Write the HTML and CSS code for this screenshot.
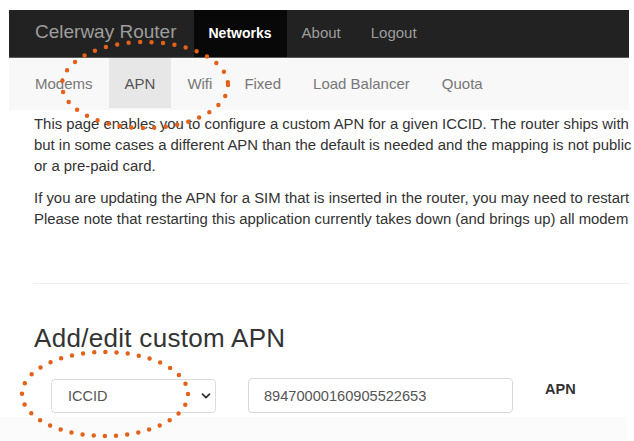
FILE: index.html
```html
<!DOCTYPE html>
<html>
<head>
<meta charset="utf-8">
<title>Celerway Router - APN</title>
<link rel="stylesheet" href="styles.css">
</head>
<body>
<div class="page">
  <nav class="navbar">
    <span class="brand">Celerway Router</span>
    <ul class="nav">
      <li class="active">Networks</li>
      <li>About</li>
      <li>Logout</li>
    </ul>
  </nav>
  <nav class="subnav">
    <ul class="tabs">
      <li>Modems</li>
      <li class="active">APN</li>
      <li>Wifi</li>
      <li>Fixed</li>
      <li>Load Balancer</li>
      <li>Quota</li>
    </ul>
  </nav>
</div>
<main class="content">
  <p><span class="line">This page enables you to configure a custom APN for a given ICCID. The router ships with</span><span class="line">but in some cases a different APN than the default is needed and the mapping is not public</span><span class="line">or a pre-paid card.</span></p>
  <p><span class="line">If you are updating the APN for a SIM that is inserted in the router, you may need to restart</span><span class="line">Please note that restarting this application currently takes down (and brings up) all modem</span></p>
  <hr class="rule">
  <h2 class="title">Add/edit custom APN</h2>
  <div class="form-row">
    <div class="select">
      <span>ICCID</span>
      <svg class="chev" width="10" height="8" viewBox="0 0 10 8"><path d="M1.5 2.2 L5 5.6 L8.5 2.2" fill="none" stroke="#333" stroke-width="1.8" stroke-linecap="round" stroke-linejoin="round"/></svg>
    </div>
    <div class="input">89470000160905522653</div>
    <label class="label">APN</label>
  </div>
  <div class="below"></div>
</main>
<svg class="annot" width="634" height="441" viewBox="0 0 634 441">
  <ellipse cx="145" cy="85" rx="83" ry="43" fill="none" stroke="#e2621b" stroke-width="4.5" stroke-dasharray="0 11.5" stroke-linecap="round"/>
  <ellipse cx="105" cy="394" rx="83" ry="42" fill="none" stroke="#e2621b" stroke-width="4.5" stroke-dasharray="0 11.2" stroke-linecap="round"/>
</svg>
</body>
</html>
```
FILE: styles.css
```css
* { box-sizing: border-box; }
html, body {
  margin: 0;
  padding: 0;
  width: 634px;
  height: 441px;
  overflow: hidden;
  background: #fff;
  font-family: "Liberation Sans", Arial, sans-serif;
  color: #333;
}
body { position: relative; }

.page {
  padding: 10px 5px 0 9px;
}

.navbar {
  display: flex;
  align-items: stretch;
  height: 48px;
  background: #222;
  border-bottom: 1px solid #5a5a5a;
  padding-left: 11px;
}
.brand {
  display: flex;
  align-items: center;
  padding: 0 17px 3px 15px;
  font-size: 19px;
  color: #9d9d9d;
}
.nav {
  display: flex;
  list-style: none;
  margin: 0;
  padding: 0;
}
.nav li {
  display: flex;
  align-items: center;
  padding: 0 15px 2px;
  font-size: 15px;
  color: #9d9d9d;
}
.nav li.active {
  background: #080808;
  color: #fff;
  font-weight: bold;
  font-size: 14px;
}

.subnav {
  background: #f8f8f8;
  height: 52px;
  padding: 0 0 2px 10px;
}
.tabs {
  display: flex;
  list-style: none;
  margin: 0;
  padding: 0;
  height: 50px;
}
.tabs li {
  display: flex;
  align-items: center;
  padding: 0 16px;
  font-size: 15px;
  color: #777;
}
.tabs li.active {
  background: #e7e7e7;
  color: #555;
}

.content {
  padding: 4px 5px 0 34px;
}
.content p {
  margin: 0 0 11px;
  font-size: 14.9px;
  line-height: 21px;
  color: #333;
  white-space: nowrap;
}
.line { display: block; }

.rule {
  border: 0;
  border-top: 1px solid #efefef;
  margin: 53px 0 0 -1px;
  height: 0;
}

.title {
  margin: 39px 0 25px;
  font-size: 26px;
  line-height: 30px;
  letter-spacing: 0.3px;
  font-weight: normal;
  color: #333;
}

.form-row {
  display: flex;
  align-items: center;
  height: 35px;
}
.select {
  display: flex;
  align-items: center;
  justify-content: space-between;
  margin-left: 17px;
  width: 165px;
  height: 34px;
  border: 1px solid #dcdcdc;
  border-radius: 4px;
  padding: 0 4px 0 16px;
  font-size: 14.5px;
  color: #555;
  background: #fff;
}
.chev { display: block; }
.input {
  display: flex;
  align-items: center;
  margin-left: 32px;
  width: 265px;
  height: 35px;
  border: 1px solid #d8d8d8;
  border-radius: 4px;
  padding: 0 0 0 15px;
  font-size: 14.6px;
  color: #555;
  background: #fff;
}
.label {
  margin-left: 32px;
  font-size: 14.5px;
  font-weight: bold;
  color: #333;
  padding-bottom: 13px;
}

.below {
  margin: 4px 2px 0 -34px;
  height: 30px;
  background: #fbfbfb;
}

.annot {
  position: absolute;
  left: 0;
  top: 0;
  pointer-events: none;
}
```
